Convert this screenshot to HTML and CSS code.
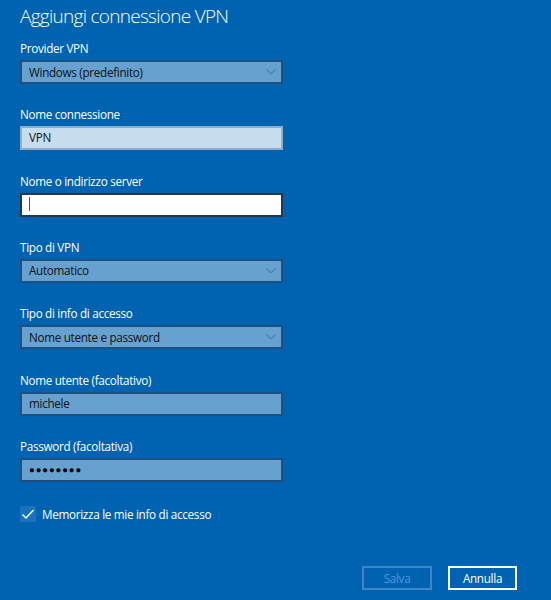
FILE: index.html
```html
<html>
	<head>
		<meta charset="utf-8" />
		<title>Aggiungi connessione VPN</title>
		<link rel="stylesheet" href="styles.css">
	</head>
	<body>
		<div class="dialog">
			<h1 class="title">Aggiungi connessione VPN</h1>

			<div class="form">
				<div class="field">
					<div class="label">Provider VPN</div>
					<div class="box select">
						<span>Windows (predefinito)</span>
						<svg class="chev" width="10" height="6" viewBox="0 0 10 6"><path d="M0.5 0.5 L5 5 L9.5 0.5" /></svg>
					</div>
				</div>

				<div class="field">
					<div class="label">Nome connessione</div>
					<div class="box filled">VPN</div>
				</div>

				<div class="field">
					<div class="label">Nome o indirizzo server</div>
					<div class="box focus"><span class="caret"></span></div>
				</div>

				<div class="field">
					<div class="label">Tipo di VPN</div>
					<div class="box select">
						<span>Automatico</span>
						<svg class="chev" width="10" height="6" viewBox="0 0 10 6"><path d="M0.5 0.5 L5 5 L9.5 0.5" /></svg>
					</div>
				</div>

				<div class="field">
					<div class="label">Tipo di info di accesso</div>
					<div class="box select">
						<span>Nome utente e password</span>
						<svg class="chev" width="10" height="6" viewBox="0 0 10 6"><path d="M0.5 0.5 L5 5 L9.5 0.5" /></svg>
					</div>
				</div>

				<div class="field">
					<div class="label">Nome utente (facoltativo)</div>
					<div class="box">michele</div>
				</div>

				<div class="field">
					<div class="label">Password (facoltativa)</div>
					<div class="box dots">&#9679;&#9679;&#9679;&#9679;&#9679;&#9679;&#9679;&#9679;</div>
				</div>
			</div>

			<div class="check">
				<span class="tick">
					<svg width="16" height="16" viewBox="0 0 16 16"><path d="M2.5 8.5 L6 12 L13.5 4" /></svg>
				</span>
				<span>Memorizza le mie info di accesso</span>
			</div>

			<div class="actions">
				<div class="btn off">Salva</div>
				<div class="btn">Annulla</div>
			</div>
		</div>
	</body>
</html>
```

FILE: styles.css
```css
body{
	margin: 0;
	background: #0063b1;
	font-family: "Open Sans", "Noto Sans", sans-serif;
	color: #fff;
}
.dialog{
	width: 551px;
	height: 600px;
	padding-left: 20px;
	box-sizing: border-box;
}
.title{
	margin: 0;
	padding-top: 2px;
	font-size: 19px;
	line-height: 28px;
	font-weight: 300;
	letter-spacing: -0.72px;
}
.form{
	margin-top: 10px;
	display: flex;
	flex-direction: column;
	gap: 22.33px;
}
.label{
	font-size: 11.7px;
	line-height: 16px;
	margin-bottom: 4px;
	letter-spacing: -0.3px;
}
.box{
	width: 263px;
	height: 24px;
	box-sizing: border-box;
	border: 2px solid #1d4f80;
	background: #66a1d0;
	color: #111;
	font-size: 11.7px;
	line-height: 19px;
	padding-left: 7px;
	letter-spacing: -0.3px;
}
.select{
	display: flex;
	justify-content: space-between;
	align-items: center;
	padding-right: 5px;
}
.chev path{
	fill: none;
	stroke: #4a82b6;
	stroke-width: 1.2;
}
.filled{
	background: #c6dcef;
	border-color: #8eaecb;
}
.focus{
	background: #fff;
	border-color: #22384f;
}
.caret{
	display: inline-block;
	width: 1px;
	height: 14px;
	margin-top: 2px;
	background: #555;
}
.dots{
	font-size: 9.5px;
	letter-spacing: 0.9px;
	color: #000;
}
.check{
	margin-top: 24px;
	display: flex;
	align-items: center;
	gap: 6px;
	font-size: 11.7px;
	line-height: 16px;
	letter-spacing: -0.3px;
}
.tick{
	width: 16px;
	height: 16px;
	background: #1a72bd;
	display: block;
}
.tick svg{
	display: block;
}
.tick path{
	fill: none;
	stroke: #fff;
	stroke-width: 1.4;
}
.actions{
	margin-top: 44px;
	display: flex;
	justify-content: flex-end;
	gap: 16px;
	padding-right: 34px;
}
.btn{
	width: 69px;
	height: 24px;
	box-sizing: border-box;
	border: 2px solid #fff;
	text-align: center;
	font-size: 11.7px;
	line-height: 20px;
	letter-spacing: -0.3px;
}
.btn.off{
	width: 70px;
	border-color: #3f86c6;
	color: #5598d2;
}
```
